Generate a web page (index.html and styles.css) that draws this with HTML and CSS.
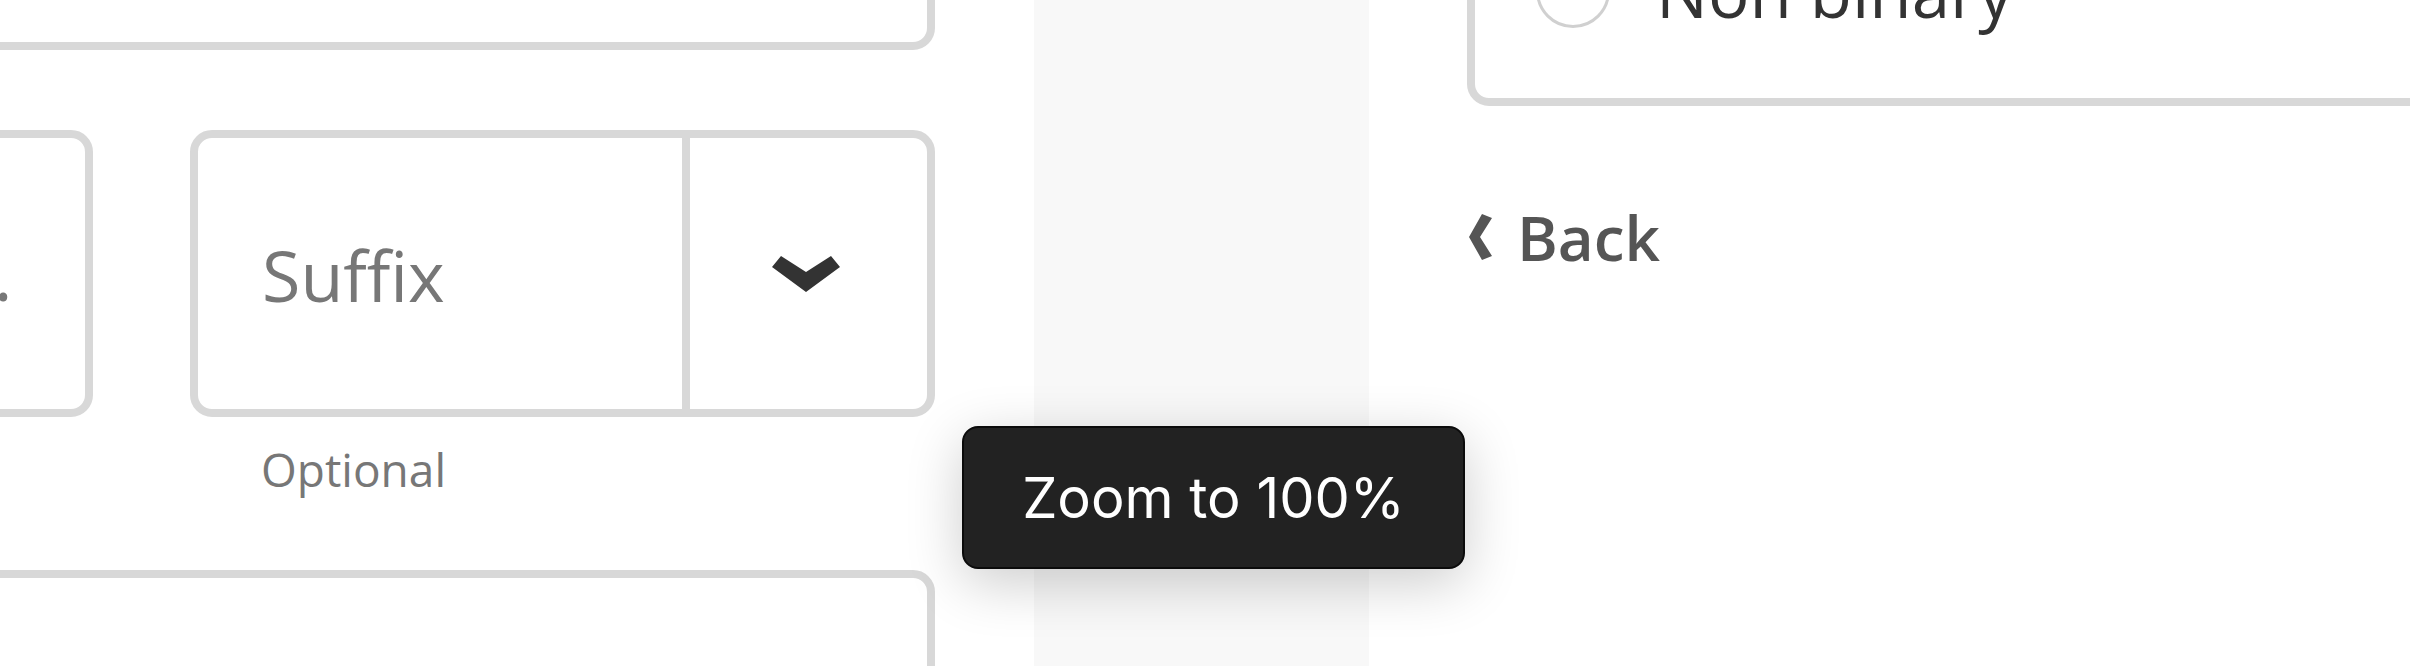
FILE: index.html
```html
<!DOCTYPE html>
<html lang="en">
<head>
    <meta charset="UTF-8">
    <meta name="viewport" content="width=device-width, initial-scale=1.0">
    <title>Personal details</title>
    <link rel="stylesheet" href="styles.css">
</head>
<body>
    <div class="page">
        <section class="form-pane">
            <div class="form-col">
                <div class="field field-top"></div>

                <div class="name-row">
                    <div class="field field-mi">
                        <span class="placeholder">M.I.</span>
                    </div>
                    <div class="suffix-group">
                        <div class="field field-select">
                            <span class="select-value placeholder">Suffix</span>
                            <span class="select-arrow">
                                <svg width="68" height="37" viewBox="0 0 68 37">
                                    <polygon points="0,12 9,1 34,17 59,1 68,12 34,37" fill="#333"/>
                                </svg>
                            </span>
                        </div>
                        <p class="hint">Optional</p>
                    </div>
                </div>

                <div class="field field-bottom"></div>
            </div>
        </section>

        <div class="gutter"></div>

        <section class="side-pane">
            <div class="choice-box">
                <label class="choice"><span class="radio"></span>Male</label>
                <label class="choice"><span class="radio"></span>Female</label>
                <label class="choice"><span class="radio"></span>Non binary</label>
            </div>

            <a class="back-link" href="#">
                <svg width="23" height="46" viewBox="0 0 23 46">
                    <polygon points="13,0 23,4 11,23 23,42 13,46 0,23" fill="#555"/>
                </svg>
                Back
            </a>
        </section>

        <div class="tooltip">Zoom to 100%</div>
    </div>
</body>
</html>
```

FILE: styles.css
```css
body {
    margin: 0;
    font-family: "Open Sans", Arial, sans-serif;
    background-color: #fff;
    overflow: hidden;
}

.page {
    position: relative;
    display: flex;
    width: 2410px;
    height: 666px;
    overflow: hidden;
}

/* left form column, scrolled so only part of it shows */
.form-pane {
    width: 1034px;
    flex-shrink: 0;
    background: #fff;
}

.form-col {
    width: 1115px;
    margin-left: -180px;
}

.field {
    box-sizing: border-box;
    border: 8px solid #d8d8d8;
    border-radius: 22px;
    background: #fff;
}

.field-top {
    height: 200px;
    margin-top: -150px;
}

.name-row {
    display: flex;
    gap: 97px;
    margin-top: 80px;
}

.field-mi {
    width: 273px;
    height: 287px;
    display: flex;
    align-items: center;
    padding-left: 65px;
}

.placeholder {
    font-size: 70px;
    line-height: 72px;
    color: #777;
}

.suffix-group {
    width: 745px;
}

.field-select {
    height: 287px;
    display: flex;
}

.select-value {
    flex: 1;
    display: flex;
    align-items: center;
    padding-left: 64px;
    padding-top: 3px;
}

.select-arrow {
    width: 245px;
    box-sizing: border-box;
    border-left: 8px solid #d8d8d8;
    padding-right: 6px;
    display: flex;
    align-items: center;
    justify-content: center;
}

.hint {
    margin: 29px 0 0 71px;
    font-size: 46px;
    line-height: 46px;
    color: #777;
}

.field-bottom {
    height: 300px;
    margin-top: 78px;
}

.gutter {
    width: 335px;
    flex-shrink: 0;
    background: #f8f8f8;
}

/* right side */
.side-pane {
    flex: 1;
    padding-left: 98px;
    background: #fff;
}

.choice-box {
    box-sizing: border-box;
    width: 1200px;
    margin-top: -310px;
    padding: 43px 0 57px 61px;
    border: 8px solid #d8d8d8;
    border-radius: 22px;
}

.choice {
    display: flex;
    align-items: center;
    gap: 46px;
    height: 100px;
    font-size: 69px;
    color: #333;
}

.radio {
    box-sizing: border-box;
    width: 74px;
    height: 74px;
    border: 3px solid #d0d0d0;
    border-radius: 50%;
}

.back-link {
    display: flex;
    align-items: center;
    gap: 25px;
    margin-top: 98px;
    font-size: 62px;
    line-height: 66px;
    font-weight: 600;
    color: #555;
    text-decoration: none;
}

.back-link svg {
    margin-left: 2px;
}

.tooltip {
    position: absolute;
    left: 962px;
    top: 426px;
    box-sizing: border-box;
    width: 503px;
    height: 143px;
    display: flex;
    align-items: center;
    justify-content: center;
    background: #222;
    border: 2px solid #0b0b0b;
    border-radius: 16px;
    box-shadow: 0 14px 56px rgba(0, 0, 0, 0.2);
    font-family: Inter, "Liberation Sans", sans-serif;
    font-size: 56px;
    color: #fff;
}
```
